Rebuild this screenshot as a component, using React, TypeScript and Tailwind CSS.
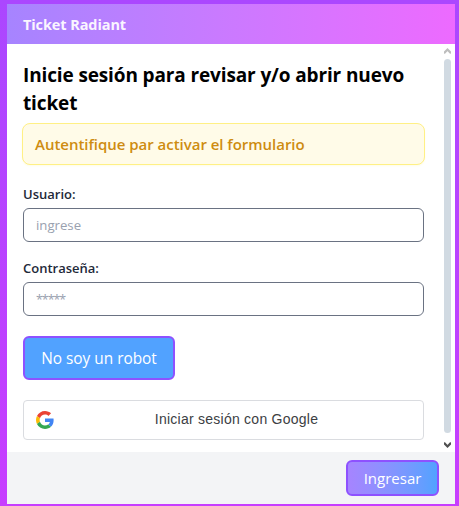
import React from "react";

function GoogleLogo() {
  return (
    <svg viewBox="0 0 48 48" className="h-[18px] w-[18px] shrink-0">
      <path fill="#EA4335" d="M24 9.5c3.54 0 6.71 1.22 9.21 3.6l6.85-6.85C35.9 2.38 30.47 0 24 0 14.62 0 6.51 5.38 2.56 13.22l7.98 6.19C12.43 13.72 17.74 9.5 24 9.5z" />
      <path fill="#4285F4" d="M46.98 24.55c0-1.57-.15-3.09-.38-4.55H24v9.02h12.94c-.58 2.96-2.26 5.48-4.78 7.18l7.73 6c4.51-4.18 7.09-10.36 7.09-17.65z" />
      <path fill="#FBBC05" d="M10.53 28.59c-.48-1.45-.76-2.99-.76-4.59s.27-3.14.76-4.59l-7.98-6.19C.92 16.46 0 20.12 0 24c0 3.88.92 7.54 2.56 10.78l7.97-6.19z" />
      <path fill="#34A853" d="M24 48c6.48 0 11.93-2.13 15.89-5.81l-7.73-6c-2.15 1.45-4.92 2.3-8.16 2.3-6.26 0-11.57-4.22-13.47-9.91l-7.98 6.19C6.51 42.62 14.62 48 24 48z" />
    </svg>
  );
}

function Chevron({ up = false }: { up?: boolean }) {
  return (
    <svg viewBox="0 0 7 6" className="h-[6px] w-[7px] shrink-0">
      <path
        d={up ? "M0 5.2 3.5 1.6 7 5.2" : "M0 0.8 3.5 4.4 7 0.8"}
        fill="none"
        stroke={up ? "#bdbdbd" : "#505050"}
        strokeWidth="2.2"
      />
    </svg>
  );
}

type FieldProps = { label: string; type: string; placeholder: string };

function Field({ label, type, placeholder }: FieldProps) {
  return (
    <label className="block">
      <span className="block h-5 text-[13px] leading-5 font-semibold text-gray-800">{label}</span>
      <input
        type={type}
        placeholder={placeholder}
        className={`mt-1 block h-[34px] w-full rounded-md border border-gray-500 px-3 placeholder:text-gray-400 ${
          type === "password" ? "text-[12.5px] tracking-[-1.05px]" : "text-[13.2px]"
        }`}
      />
    </label>
  );
}

export default function App() {
  return (
    <div className="h-[506px] w-[459px] bg-linear-to-b from-[#ab47ff] to-[#c73dff] pt-1 pr-1 pb-0.5 pl-[7px] font-['Open_Sans','Noto_Sans',sans-serif]">
      <div className="flex h-full flex-col bg-white">
        <header className="flex h-10 shrink-0 items-center bg-linear-to-r from-[#a684ff] to-[#ed6aff] px-4 pt-px text-[14.5px] font-bold tracking-[-0.1px] text-purple-50">
          Ticket Radiant
        </header>
        <div className="flex min-h-0 flex-1">
          <main className="w-[433px] shrink-0 pt-[17px] pr-4 pl-4">
            <h1 className="text-[19px] leading-7 font-bold tracking-[-0.13px] text-black">
              Inicie sesión para revisar y/o abrir nuevo<br />ticket
            </h1>
            <div className="-mx-px mt-[6px] flex h-[42px] items-center rounded-lg border border-[#fff085] bg-[#fffbe8] px-3 text-[15px] font-semibold tracking-[-0.03px] text-[#ce8c10] shadow-xs shadow-yellow-50">
              Autentifique par activar el formulario
            </div>
            <div className="mt-[19px] space-y-4">
              <Field label="Usuario:" type="text" placeholder="ingrese" />
              <Field label="Contraseña:" type="password" placeholder="*****" />
            </div>
            <button className="mt-5 flex h-11 w-[152px] items-center justify-center rounded-md border-2 border-[#8e51ff] bg-[#51a2ff] pt-0.5 text-[15.4px] text-white">
              No soy un robot
            </button>
            <button className="mt-5 flex h-10 w-full items-center rounded border border-[#dadce0] px-3 pb-px font-['Liberation_Sans',Arial,sans-serif] text-[14px] tracking-[0.25px] text-[#3c4043]">
              <GoogleLogo />
              <span className="flex-1 pl-2 text-center">Iniciar sesión con Google</span>
            </button>
          </main>
          <div className="ml-[4px] flex w-[7px] flex-col items-center pt-1 pb-1">
            <Chevron up />
            <div className="mt-[5px] mb-[9px] w-[7px] flex-1 rounded-full bg-[#d1dae2]" />
            <Chevron />
          </div>
        </div>
        <footer className="flex h-[52px] shrink-0 items-center justify-end bg-gray-100 pr-4">
          <button className="flex h-9 w-[93px] items-center justify-center rounded-md border-2 border-[#8e51ff] bg-linear-to-r from-[#a684ff] to-[#51a2ff] text-[15px] text-white">
            Ingresar
          </button>
        </footer>
      </div>
    </div>
  );
}
